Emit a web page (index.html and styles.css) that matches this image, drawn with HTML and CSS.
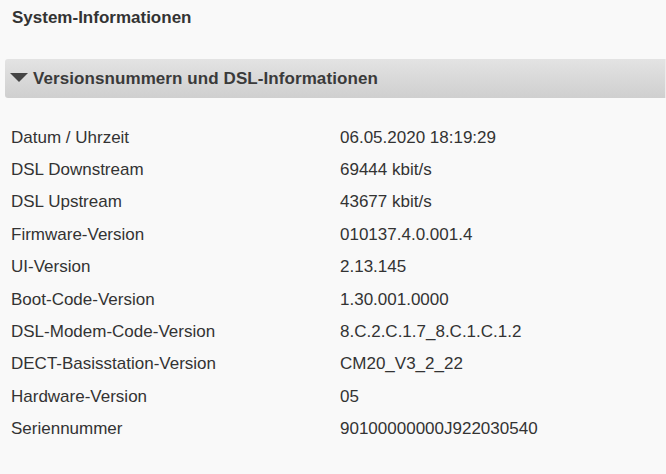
FILE: index.html
```html
<!DOCTYPE html>
<html lang="de">
<head>
<meta charset="utf-8">
<title>System-Informationen</title>
<link rel="stylesheet" href="styles.css">
</head>
<body>
<div class="page">
  <h1 class="title">System-Informationen</h1>
  <section class="panel">
    <div class="panel-head">
      <span class="caret"></span>
      <span class="panel-title">Versionsnummern und DSL-Informationen</span>
    </div>
    <div class="rows">
      <div class="row"><span class="label">Datum / Uhrzeit</span><span class="value">06.05.2020 18:19:29</span></div>
      <div class="row"><span class="label">DSL Downstream</span><span class="value">69444 kbit/s</span></div>
      <div class="row"><span class="label">DSL Upstream</span><span class="value">43677 kbit/s</span></div>
      <div class="row"><span class="label">Firmware-Version</span><span class="value">010137.4.0.001.4</span></div>
      <div class="row"><span class="label">UI-Version</span><span class="value">2.13.145</span></div>
      <div class="row"><span class="label">Boot-Code-Version</span><span class="value">1.30.001.0000</span></div>
      <div class="row"><span class="label">DSL-Modem-Code-Version</span><span class="value">8.C.2.C.1.7_8.C.1.C.1.2</span></div>
      <div class="row"><span class="label">DECT-Basisstation-Version</span><span class="value">CM20_V3_2_22</span></div>
      <div class="row"><span class="label">Hardware-Version</span><span class="value">05</span></div>
      <div class="row"><span class="label">Seriennummer</span><span class="value">90100000000J922030540</span></div>
    </div>
  </section>
</div>
</body>
</html>
```
FILE: styles.css
```css
html, body {
  margin: 0;
  padding: 0;
  background: #f9f9f9;
}
body {
  font-family: "Liberation Sans", Arial, sans-serif;
  color: #333;
}
.page {
  width: 666px;
  height: 474px;
  overflow: hidden;
}
.title {
  margin: 0;
  padding: 8px 0 0 12px;
  height: 50px;
  box-sizing: border-box;
  font-size: 17px;
  font-weight: bold;
  line-height: 20px;
  color: #333;
}
.panel {
  margin: 9px 0 0 5px;
}
.panel-head {
  height: 39px;
  display: flex;
  align-items: center;
  background: linear-gradient(#e3e3e3, #cfcfcf);
  border-radius: 3px 0 0 3px;
  border-right: 1px solid #ececec;
}
.caret {
  width: 0;
  height: 0;
  margin-left: 5px;
  margin-right: 5px;
  border-left: 9px solid transparent;
  border-right: 9px solid transparent;
  border-top: 9px solid #444;
  margin-top: -2px;
}
.panel-title {
  font-size: 17px;
  font-weight: bold;
  color: #3a3a3a;
  letter-spacing: 0.08px;
}
.rows {
  padding-top: 23.5px;
}
.row {
  display: flex;
  height: 32.4px;
  align-items: center;
  font-size: 17px;
  line-height: 20px;
}
.label {
  width: 329px;
  padding-left: 6px;
  color: #333;
}
.value {
  color: #333;
}
```
